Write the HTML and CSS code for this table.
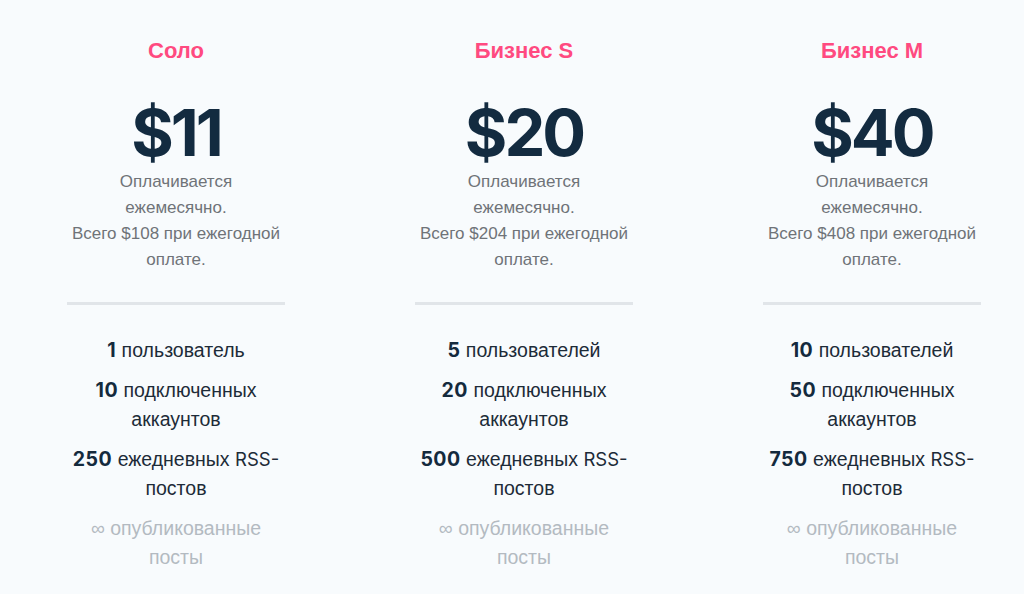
FILE: index.html
```html
<!DOCTYPE html>
<html lang="ru">
<head>
<meta charset="utf-8">
<link rel="stylesheet" href="styles.css">
</head>
<body>
<main class="plans">
  <section class="plan">
    <h2 class="plan-name">Соло</h2>
    <div class="price">$11</div>
    <p class="billing">Оплачивается<br>ежемесячно.<br>Всего $108 при ежегодной<br>оплате.</p>
    <hr class="divider">
    <ul class="features">
      <li><b>1</b> пользователь</li>
      <li><b>10</b> подключенных<br>аккаунтов</li>
      <li><b>250</b> ежедневных <span class="lat">RSS-</span><br>постов</li>
      <li class="muted">∞ опубликованные<br>посты</li>
    </ul>
  </section>
  <section class="plan">
    <h2 class="plan-name">Бизнес S</h2>
    <div class="price">$20</div>
    <p class="billing">Оплачивается<br>ежемесячно.<br>Всего $204 при ежегодной<br>оплате.</p>
    <hr class="divider">
    <ul class="features">
      <li><b>5</b> пользователей</li>
      <li><b>20</b> подключенных<br>аккаунтов</li>
      <li><b>500</b> ежедневных <span class="lat">RSS-</span><br>постов</li>
      <li class="muted">∞ опубликованные<br>посты</li>
    </ul>
  </section>
  <section class="plan">
    <h2 class="plan-name">Бизнес M</h2>
    <div class="price">$40</div>
    <p class="billing">Оплачивается<br>ежемесячно.<br>Всего $408 при ежегодной<br>оплате.</p>
    <hr class="divider">
    <ul class="features">
      <li><b>10</b> пользователей</li>
      <li><b>50</b> подключенных<br>аккаунтов</li>
      <li><b>750</b> ежедневных <span class="lat">RSS-</span><br>постов</li>
      <li class="muted">∞ опубликованные<br>посты</li>
    </ul>
  </section>
</main>
</body>
</html>
```
FILE: styles.css
```css
html, body {
  margin: 0;
  padding: 0;
  background: #f8fbfd;
}
body {
  font-family: "Liberation Sans", Arial, sans-serif;
  width: 1024px;
  height: 594px;
  overflow: hidden;
}
.plans {
  display: grid;
  grid-template-columns: repeat(3, 218px);
  column-gap: 130px;
  padding: 36px 0 0 67px;
}
.plan {
  display: flex;
  flex-direction: column;
  align-items: center;
  text-align: center;
}
.plan-name {
  margin: 0;
  font-size: 22px;
  line-height: 30px;
  font-weight: 700;
  color: #ff4a80;
}
.price {
  margin-top: 32px;
  font-family: Inter, "Liberation Sans", sans-serif;
  font-weight: 700;
  font-size: 65px;
  line-height: 70px;
  letter-spacing: -3px;
  color: #132b40;
}
.billing {
  margin: 1px 0 0;
  font-size: 17px;
  line-height: 26px;
  color: #6f7378;
}
.divider {
  align-self: stretch;
  margin: 29px 0 0;
  border: 0;
  height: 3px;
  background: #e1e5e9;
}
.features {
  list-style: none;
  margin: 31px 0 0;
  padding: 0;
  display: flex;
  flex-direction: column;
  gap: 11px;
  font-size: 19.5px;
  line-height: 29px;
  color: #1d2b38;
}
.features b, .features .lat {
  font-family: Inter, "Liberation Sans", sans-serif;
}
.features .lat {
  font-size: 18.5px;
}
.features b {
  font-weight: 700;
  letter-spacing: 0.5px;
  color: #142a3d;
}
.features .muted {
  color: #b3bac1;
}
```
